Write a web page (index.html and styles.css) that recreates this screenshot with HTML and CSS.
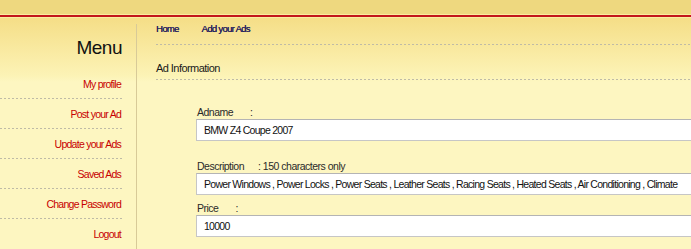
FILE: index.html
```html
<!DOCTYPE html>
<html lang="en">
  <head>
    <meta charset="UTF-8" />
    <meta name="viewport" content="width=device-width, initial-scale=1.0" />
    <link rel="stylesheet" href="styles.css">
    <title>Ad Information</title>
  </head>
  <body>
    <div class="topbar"></div>
    <div class="redline"></div>
    <div class="page">
      <div class="sidebar">
        <h2 class="menu-title">Menu</h2>
        <ul class="menu">
          <li><a href="#">My profile</a></li>
          <li><a href="#">Post your Ad</a></li>
          <li><a href="#">Update your Ads</a></li>
          <li><a href="#">Saved Ads</a></li>
          <li><a href="#">Change Password</a></li>
          <li><a href="#">Logout</a></li>
        </ul>
      </div>
      <div class="main">
        <div class="nav dots">
          <a href="#">Home</a>
          <a href="#">Add your Ads</a>
        </div>
        <h3 class="section-title dots">Ad Information</h3>
        <form class="ad-form">
          <div class="field field-wide">
            <label>Adname<span class="colon">:</span></label>
            <input type="text" value="BMW Z4 Coupe 2007">
          </div>
          <div class="field">
            <label>Description<span class="colon colon-short">:</span> 150 characters only</label>
            <input type="text" value="Power Windows , Power Locks , Power Seats , Leather Seats , Racing Seats , Heated Seats , Air Conditioning , Climate">
          </div>
          <div class="field">
            <label>Price<span class="colon">:</span></label>
            <input type="text" value="10000">
          </div>
        </form>
      </div>
    </div>
  </body>
</html>
```

FILE: styles.css
```css
* {
  box-sizing: border-box;
}

body {
  margin: 0;
  overflow: hidden;
  font-family: "Liberation Sans", Arial, sans-serif;
  background-color: #fdf6c1;
}

.topbar {
  height: 15px;
  background-color: #eed87f;
  border-bottom: 1px solid #fbec9e;
}

.redline {
  height: 3px;
  background-color: #c3161c;
  border-bottom: 1px solid #fbec9e;
}

.page {
  display: flex;
  min-height: 240px;
  background: linear-gradient(#f5de87, #fcf3b6 58px, #fdf6c1 64px);
}

.dots {
  background-image: linear-gradient(to right, #bfbba6 50%, transparent 50%);
  background-size: 4px 1px;
  background-repeat: repeat-x;
  background-position: left bottom;
}

/* left menu */
.sidebar {
  flex: none;
  width: 137px;
  margin-top: 6px;
  padding-right: 14px;
  border-right: 1px solid #d8ca98;
  text-align: right;
}

.menu-title {
  margin: 0;
  padding-top: 13px;
  font-size: 19px;
  line-height: 22px;
  font-weight: normal;
  letter-spacing: -0.5px;
  color: #111;
}

.menu {
  list-style: none;
  margin: 10px 0 0;
  padding: 0;
}

.menu li {
  padding: 8px 1px 8px 0;
  font-size: 10.5px;
  line-height: 14px;
  letter-spacing: -0.75px;
  background-image: linear-gradient(to right, #bfbba6 50%, transparent 50%);
  background-size: 4px 1px;
  background-repeat: repeat-x;
  background-position: left bottom;
}

.menu li:last-child {
  background-image: none;
}

.menu a {
  color: #c80000;
  text-decoration: none;
}

/* content */
.main {
  flex: 1;
  padding-left: 19px;
}

.nav {
  display: flex;
  gap: 23px;
  padding: 4px 0 9px;
  font-size: 9.5px;
  line-height: 14px;
  letter-spacing: -0.7px;
}

.nav a {
  color: #24205e;
  text-decoration: none;
  text-shadow: 0.3px 0 0 #24205e;
}

.section-title {
  margin: 0;
  padding: 15px 0 4px;
  font-size: 11px;
  line-height: 16px;
  font-weight: normal;
  letter-spacing: -0.55px;
  color: #1a1a1a;
}

.ad-form {
  padding: 26px 0 0 40px;
}

.field {
  margin-bottom: 7px;
}

.field-wide {
  margin-bottom: 19px;
}

.field label {
  display: block;
  padding-left: 1px;
  font-size: 10.5px;
  line-height: 13px;
  letter-spacing: -0.5px;
  color: #2a2a2a;
}

.colon {
  margin-left: 17px;
}

.colon-short {
  margin-left: 14px;
}

.field input {
  display: block;
  width: 640px;
  height: 22px;
  padding: 0 7px;
  border: 1px solid #c6c6c6;
  border-top-color: #b4b4b4;
  background-color: #fff;
  font-family: inherit;
  font-size: 10.5px;
  letter-spacing: -0.72px;
  color: #111;
}
```
